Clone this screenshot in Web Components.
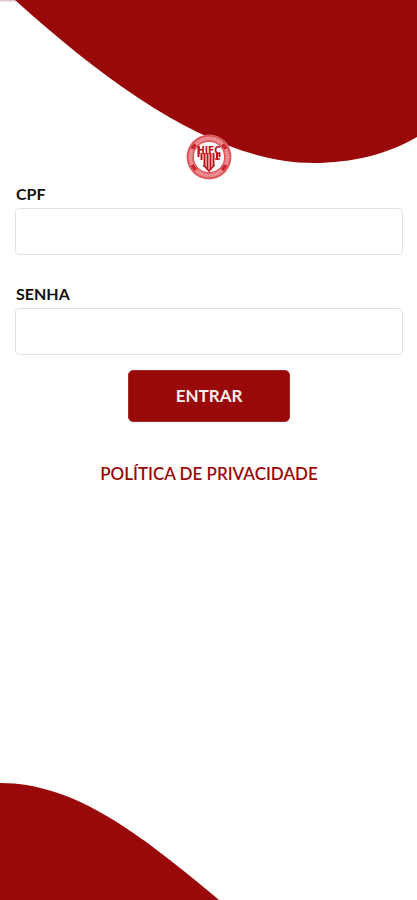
<!DOCTYPE html>
<html lang="pt-BR">
<head>
<meta charset="utf-8">
<meta name="viewport" content="width=device-width, initial-scale=1">
<title>Entrar</title>
<style>
  body { margin: 0; background: #fff; font-family: Lato, "Open Sans", sans-serif; }
</style>
</head>
<body>
<login-page>
  <club-crest></club-crest>
  <login-form>
    <text-field label="CPF" type="text"></text-field>
    <text-field label="SENHA" type="password"></text-field>
    <primary-button>ENTRAR</primary-button>
    <policy-link href="#privacidade">POLÍTICA DE PRIVACIDADE</policy-link>
  </login-form>
</login-page>
<script>
const define = (name, html, setup) => {
  const template = document.createElement('template');
  template.innerHTML = html;
  customElements.define(name, class extends HTMLElement {
    constructor() {
      super();
      this.attachShadow({ mode: 'open' }).append(template.content.cloneNode(true));
    }
    connectedCallback() { if (setup) setup(this, this.shadowRoot); }
  });
};

define('login-page', `
  <style>
    :host { display: block; position: relative; min-height: 100vh; overflow: hidden; box-sizing: border-box; --brand: #9a0909; }
    .wave { position: absolute; left: 0; width: 100%; height: auto; fill: var(--brand); pointer-events: none; }
    .top { top: 0; }
    .bottom { bottom: 0; }
    main { position: relative; display: flex; flex-direction: column; align-items: center; padding: 134px 14px 48px 15px; }
  </style>
  <svg class="wave top" viewBox="0 0 417 164" aria-hidden="true">
    <path fill="#dfc9cc" d="M0 0H16V1.500H0Z"/>
    <path d="M15 0C120 95 222 163 313 163C352 163 388 154 417 137V0Z"/>
  </svg>
  <svg class="wave bottom" viewBox="0 0 417 118" aria-hidden="true">
    <path d="M0 1C75 1 140 52 219 118H0Z"/>
  </svg>
  <main><slot></slot></main>`);

define('club-crest', `
  <style>
    :host { display: block; width: 46px; height: 46px; }
    svg { display: block; width: 100%; height: 100%; }
    text { font-family: "DejaVu Sans Condensed", "DejaVu Sans", sans-serif; font-weight: 700; fill: #c3141c; text-anchor: middle; }
  </style>
  <svg viewBox="0 0 46 46" role="img" aria-label="HIFC">
    <circle cx="23" cy="23" r="22.500" fill="#e6777c"/>
    <circle cx="23" cy="23" r="21.300" fill="none" stroke="#d7474d" stroke-width="1"/>
    <circle cx="23" cy="23" r="18.500" fill="none" stroke="#efa3a6" stroke-width="2.400" stroke-dasharray="1.300 1.200"/>
    <g fill="none" stroke="#c9262d" stroke-width="3.600">
      <path d="M6.300 15A18.500 18.500 0 0 1 9.400 10.500M36.600 10.500A18.500 18.500 0 0 1 39.700 15M6.300 31A18.500 18.500 0 0 0 10 36M36 36A18.500 18.500 0 0 0 39.700 31"/>
    </g>
    <circle cx="23" cy="23" r="15.800" fill="#fff" stroke="#d43c42" stroke-width="1"/>
    <text x="23" y="20" font-size="10">HIFC</text>
    <g fill="none" stroke="#c3141c" stroke-width="2">
      <path d="M12.500 12V23M15.500 19V26M18.500 19V33M21.500 19V36M24.500 19V36M27.500 19V32M31 19V26M33.500 19V23"/>
      <path d="M17.500 31L23 37L28.500 31M29 25H34" stroke-width="1.600"/>
    </g>
  </svg>`);

define('login-form', `
  <style>
    :host { display: block; width: 100%; }
    form { display: flex; flex-direction: column; margin: 0; }
    ::slotted(text-field:nth-of-type(2)) { margin-top: 25px; }
    ::slotted(primary-button) { align-self: center; margin-top: 15px; }
    ::slotted(policy-link) { align-self: center; margin-top: 40px; }
  </style>
  <form><slot></slot></form>`);

define('text-field', `
  <style>
    :host { display: block; padding-top: 4px; }
    label { display: block; padding-left: 1px; margin-bottom: 4px; font-size: 16px; line-height: 20px; font-weight: 700; color: #111; }
    input { display: block; box-sizing: border-box; width: 100%; height: 47px; padding: 0 12px; border: 1px solid #e2e2e2; border-radius: 4px; background: #fff; font: inherit; font-size: 16px; color: #111; }
    input:focus { outline: 2px solid #9a090955; }
  </style>
  <label for="field"></label>
  <input id="field">`,
  (host, root) => {
    root.querySelector('label').textContent = host.getAttribute('label');
    root.querySelector('input').type = host.getAttribute('type');
  });

define('primary-button', `
  <style>
    :host { display: block; }
    button { display: block; min-width: 162px; height: 52px; padding: 0 24px 2px; border: 1px solid #a52a2a; border-radius: 5px; background: var(--brand); color: #fbeeee; font: inherit; font-size: 17px; font-weight: 700; cursor: pointer; }
  </style>
  <button type="button"><slot></slot></button>`);

define('policy-link', `
  <style>
    :host { display: block; }
    a { color: var(--brand); font-size: 17px; line-height: 24px; font-weight: 600; text-decoration: none; }
  </style>
  <a><slot></slot></a>`,
  (host, root) => { root.querySelector('a').href = host.getAttribute('href'); });
</script>
</body>
</html>
